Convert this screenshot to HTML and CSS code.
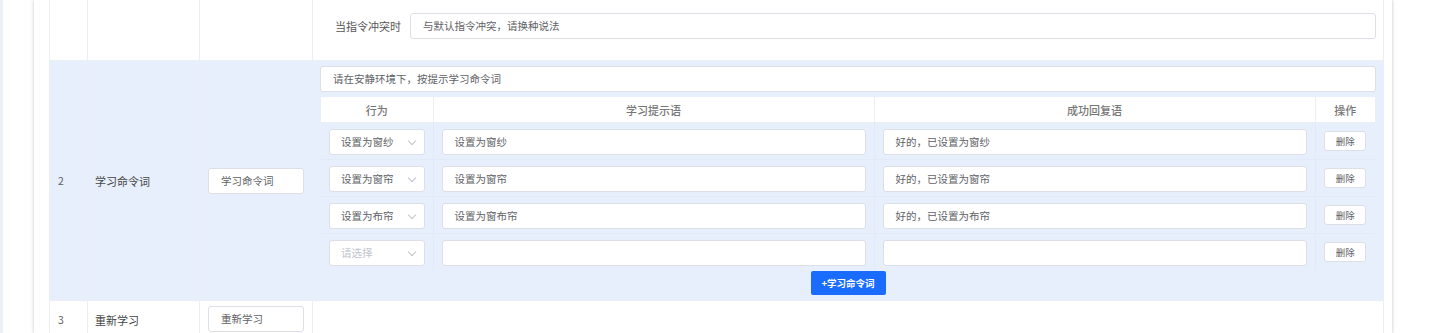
FILE: index.html
```html
<!DOCTYPE html>
<html lang="zh-CN">
<head>
  <meta charset="UTF-8" />
  <meta name="viewport" content="width=device-width, initial-scale=1.0" />
  <title>命令词设置</title>
  <link rel="stylesheet" href="styles.css">
</head>
<body>
  <div class="page">
    <div class="side-edge"></div>
    <div class="main">
      <div class="card">
        <table class="cmd-table">
          <colgroup>
            <col class="c-no" />
            <col class="c-name" />
            <col class="c-word" />
            <col />
          </colgroup>
          <tr class="row-plain row-first">
            <td></td>
            <td></td>
            <td></td>
            <td class="cell-conflict">
              <div class="form-line">
                <label class="form-label">当指令冲突时</label>
                <div class="input">与默认指令冲突，请换种说法</div>
              </div>
            </td>
          </tr>

          <tr class="row-active">
            <td class="cell-no">2</td>
            <td class="cell-name">学习命令词</td>
            <td class="cell-word"><div class="input input-sm">学习命令词</div></td>
            <td class="cell-detail">
              <div class="input">请在安静环境下，按提示学习命令词</div>
              <table class="sub-table">
                <colgroup>
                  <col class="s-act" />
                  <col />
                  <col />
                  <col class="s-op" />
                </colgroup>
                <tr class="sub-head">
                  <th>行为</th>
                  <th>学习提示语</th>
                  <th>成功回复语</th>
                  <th>操作</th>
                </tr>
                <tr>
                  <td><div class="select">设置为窗纱<span class="arrow"></span></div></td>
                  <td><div class="input">设置为窗纱</div></td>
                  <td><div class="input">好的，已设置为窗纱</div></td>
                  <td class="op"><button class="btn-del">删除</button></td>
                </tr>
                <tr>
                  <td><div class="select">设置为窗帘<span class="arrow"></span></div></td>
                  <td><div class="input">设置为窗帘</div></td>
                  <td><div class="input">好的，已设置为窗帘</div></td>
                  <td class="op"><button class="btn-del">删除</button></td>
                </tr>
                <tr>
                  <td><div class="select">设置为布帘<span class="arrow"></span></div></td>
                  <td><div class="input">设置为窗布帘</div></td>
                  <td><div class="input">好的，已设置为布帘</div></td>
                  <td class="op"><button class="btn-del">删除</button></td>
                </tr>
                <tr>
                  <td><div class="select placeholder">请选择<span class="arrow"></span></div></td>
                  <td><div class="input"></div></td>
                  <td><div class="input"></div></td>
                  <td class="op"><button class="btn-del">删除</button></td>
                </tr>
              </table>
              <div class="add-line">
                <button class="btn-add">+学习命令词</button>
              </div>
            </td>
          </tr>

          <tr class="row-plain row-last">
            <td class="cell-no">3</td>
            <td class="cell-name">重新学习</td>
            <td class="cell-word"><div class="input input-sm">重新学习</div></td>
            <td class="cell-detail"></td>
          </tr>
        </table>
      </div>
    </div>
  </div>
</body>
</html>
```

FILE: styles.css
```css
body {
  margin: 0;
  background: #fff;
  font-family: "Noto Sans CJK SC", "Noto Sans", sans-serif;
  font-size: 10.5px;
  color: #606266;
  overflow: hidden;
}

.page {
  display: flex;
  height: 333px;
}

.side-edge {
  width: 3px;
  background: #eef0f7;
}

.main {
  padding-left: 31px;
}

.card {
  width: 1335px;
  height: 100%;
  padding: 0 8px 0 15px;
  background: #fff;
  box-shadow: -1px 0 3px rgba(0, 0, 0, 0.12), 1px 0 3px rgba(0, 0, 0, 0.12);
}

.cmd-table {
  width: 1335px;
  border-collapse: collapse;
  table-layout: fixed;
}

.c-no { width: 38px; }
.c-name { width: 112px; }
.c-word { width: 113px; }

.cmd-table > tbody > tr > td {
  border: 1px solid #ebeef5;
  border-top: none;
  vertical-align: middle;
  padding: 0;
}

.row-plain > td {
  background: #fff;
}

.row-active > td {
  background: #e8effc;
}

.cmd-table .row-last > td {
  vertical-align: top;
  height: 44px;
}

.cell-no {
  padding-left: 8px !important;
  color: #606266;
}

.cell-name {
  padding-left: 7px !important;
  font-size: 11px;
  color: #444;
}

.cell-word {
  padding: 0 8px !important;
}

.row-last .cell-no,
.row-last .cell-name {
  padding-top: 11px !important;
}

.row-last .cell-word {
  padding-top: 5px !important;
}

.cell-detail {
  padding: 5px 7px 5px !important;
}

.cell-conflict {
  padding: 0 7px !important;
}

.form-line {
  box-sizing: border-box;
  height: 60px;
  display: flex;
  align-items: flex-start;
  gap: 9px;
  padding-top: 13px;
}

.form-label {
  width: 81px;
  line-height: 26px;
  text-align: right;
  font-size: 11px;
  color: #555;
}

.form-line .input {
  flex: 1;
}

.input,
.select {
  box-sizing: border-box;
  height: 26px;
  line-height: 24px;
  padding: 0 12px;
  background: #fff;
  border: 1px solid #dcdfe6;
  border-radius: 3px;
  color: #606266;
  white-space: nowrap;
  overflow: hidden;
}

.input-sm {
  width: 96px;
}

.sub-table {
  width: 1054px;
  margin: 5px 1px 0;
  border-collapse: collapse;
  table-layout: fixed;
}

.s-act { width: 112px; }
.s-op { width: 60px; }

.sub-table th {
  height: 25px;
  padding: 0;
  background: #fff;
  border: 1px solid #ebeef5;
  border-top: none;
  font-size: 11px;
  font-weight: 500;
  color: #777;
}

.sub-table th:first-child { border-left: none; }
.sub-table th:last-child { border-right: none; }

.sub-table td {
  height: 35px;
  padding: 1px 8px 0;
  border: 1px solid #e3eaf7;
  border-top: none;
}

.sub-table tr > td:first-child { border-left: none; }
.sub-table tr > td:last-child { border-right: none; }
.sub-table tr:last-child > td { border-bottom: none; }

.select {
  position: relative;
  width: 96px;
  padding-left: 11px;
}

.select.placeholder {
  color: #c0c4cc;
}

.arrow {
  position: absolute;
  right: 9px;
  top: 8px;
  width: 5px;
  height: 5px;
  border-right: 1px solid #c0c4cc;
  border-bottom: 1px solid #c0c4cc;
  transform: rotate(45deg);
}

.op {
  text-align: center;
  padding: 0 !important;
}

.btn-del {
  width: 42px;
  height: 20px;
  padding: 0;
  background: #fff;
  border: 1px solid #dcdfe6;
  border-radius: 3px;
  font-family: inherit;
  font-size: 9.5px;
  color: #606266;
  cursor: pointer;
}

.add-line {
  display: flex;
  justify-content: center;
  padding-top: 1px;
}

.btn-add {
  width: 75px;
  height: 24px;
  padding: 0;
  background: #1a6cff;
  border: none;
  border-radius: 2px;
  font-family: inherit;
  font-size: 9.5px;
  font-weight: 700;
  color: #fff;
  cursor: pointer;
}
```
